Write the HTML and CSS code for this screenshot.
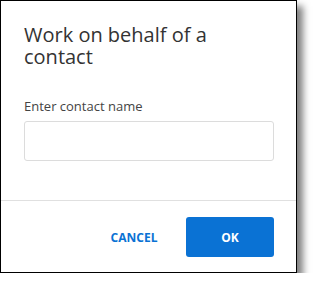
FILE: index.html
```html
<!DOCTYPE html>
<html>
<head>
<meta charset="utf-8">
<link rel="stylesheet" href="styles.css">
</head>
<body>
<div class="dialog">
  <div class="body">
    <h1 class="title">Work on behalf of a contact</h1>
    <label class="label" for="contact">Enter contact name</label>
    <input class="input" id="contact" type="text">
  </div>
  <div class="footer">
    <button class="btn btn-text">CANCEL</button>
    <button class="btn btn-primary">OK</button>
  </div>
</div>
</body>
</html>
```
FILE: styles.css
```css
html, body {
  margin: 0;
  padding: 0;
  background: #fff;
}
body {
  font-family: "Open Sans", "Noto Sans", sans-serif;
}
.dialog {
  box-sizing: border-box;
  width: 297px;
  height: 273px;
  border: 1px solid #000;
  background: #fff;
  box-shadow: 6px 6px 7px rgba(0, 0, 0, 0.5);
  display: flex;
  flex-direction: column;
}
.body {
  padding: 23px 22px 0 23px;
  display: flex;
  flex-direction: column;
  height: 199px;
  flex-shrink: 0;
  box-sizing: border-box;
}
.title {
  margin: 0;
  font-size: 20px;
  line-height: 22px;
  font-weight: 400;
  color: #333;
  width: 220px;
}
.label {
  margin-top: 29px;
  font-size: 13px;
  line-height: 18px;
  color: #444;
}
.input {
  margin-top: 6px;
  box-sizing: border-box;
  height: 40px;
  width: 100%;
  border: 1px solid #dcdcdc;
  border-radius: 3px;
  outline: none;
}
.footer {
  border-top: 1px solid #e0e0e0;
  display: flex;
  justify-content: flex-end;
  gap: 8px;
  padding: 16px 22px 0 0;
}
.btn {
  width: 88px;
  height: 40px;
  border: none;
  border-radius: 3px;
  font-family: "Open Sans", "Noto Sans", sans-serif;
  font-weight: 700;
  font-size: 12px;
  cursor: pointer;
}
.btn-text {
  background: transparent;
  color: #0a72d4;
}
.btn-primary {
  background: #0a72d4;
  color: #fff;
}
```
